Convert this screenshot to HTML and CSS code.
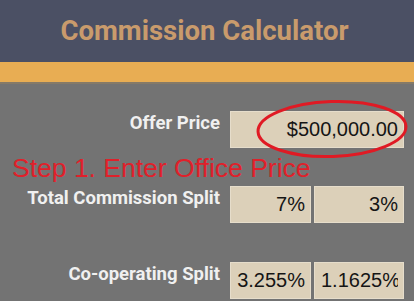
FILE: index.html
```html
<!DOCTYPE html>
<html lang="en">
<head>
    <meta charset="UTF-8">
    <meta name="viewport" content="width=device-width, initial-scale=1.0">
    <title>Commission Calculator</title>
    <link rel="stylesheet" href="styles.css">
</head>
<body>
    <div class="header">
        <h1>Commission Calculator</h1>
    </div>
    <div class="band"></div>

    <div class="calc">
        <div class="row">
            <label class="label" for="offer">Offer Price</label>
            <div class="fields single">
                <input class="field" id="offer" type="text" value="$500,000.00">
            </div>
            <!-- red circle drawn over the price -->
            <svg class="circle" width="156" height="64" viewBox="0 0 156 64">
                <ellipse cx="78" cy="32" rx="74" ry="27.5" fill="none" stroke="#e01a24" stroke-width="3" transform="rotate(-2 78 32)"/>
            </svg>
        </div>

        <div class="step">Step 1. Enter Office Price</div>

        <div class="row">
            <label class="label">Total Commission Split</label>
            <div class="fields">
                <input class="field" type="text" value="7%">
                <input class="field" type="text" value="3%">
            </div>
        </div>

        <div class="row row-far">
            <label class="label">Co-operating Split</label>
            <div class="fields">
                <input class="field" type="text" value="3.255%">
                <input class="field" type="text" value="1.1625%">
            </div>
        </div>
    </div>
</body>
</html>
```

FILE: styles.css
```css
body {
    margin: 0;
    background: #737373;
    font-family: Roboto, 'Liberation Sans', sans-serif;
    overflow: hidden;
}
.header {
    background: #4b5064;
    height: 62px;
    display: flex;
    align-items: center;
    justify-content: center;
}
h1 {
    margin: 0 5px 0 0;
    margin-top: -2px;
    font-size: 27.5px;
    font-weight: bold;
    color: #c99b6c;
}
.band {
    height: 20px;
    background: #e8ad53;
    border-bottom: 2px solid #857a68;
}
.calc {
    padding: 27px 10px 0 0;
}
.row {
    position: relative;
    display: grid;
    grid-template-columns: 220px 174px;
    column-gap: 10px;
    align-items: start;
}
.row-far {
    margin-top: 39px;
}
.label {
    padding-top: 1px;
    font-size: 18.5px;
    line-height: 22px;
    font-weight: bold;
    color: #f0f0f0;
    text-align: right;
    white-space: nowrap;
}
.fields {
    display: grid;
    grid-template-columns: 81px 90px;
    column-gap: 3px;
}
.fields.single {
    grid-template-columns: 174px;
}
.field {
    box-sizing: border-box;
    width: 100%;
    height: 37px;
    margin: 0;
    padding: 0 6px 0 7px;
    border: none;
    box-shadow: inset 0 0 0 1px #e6ddcb;
    background: #dcd0b9;
    font-family: 'Liberation Sans', Arial, sans-serif;
    font-size: 20px;
    color: #151515;
    text-align: right;
    outline: none;
}
.circle {
    position: absolute;
    left: 254px;
    top: -14px;
}
.step {
    margin: 7px 0 5px 12px;
    font-family: 'Liberation Sans', Arial, sans-serif;
    font-size: 26.5px;
    line-height: 26px;
    color: #e0202a;
}
```
